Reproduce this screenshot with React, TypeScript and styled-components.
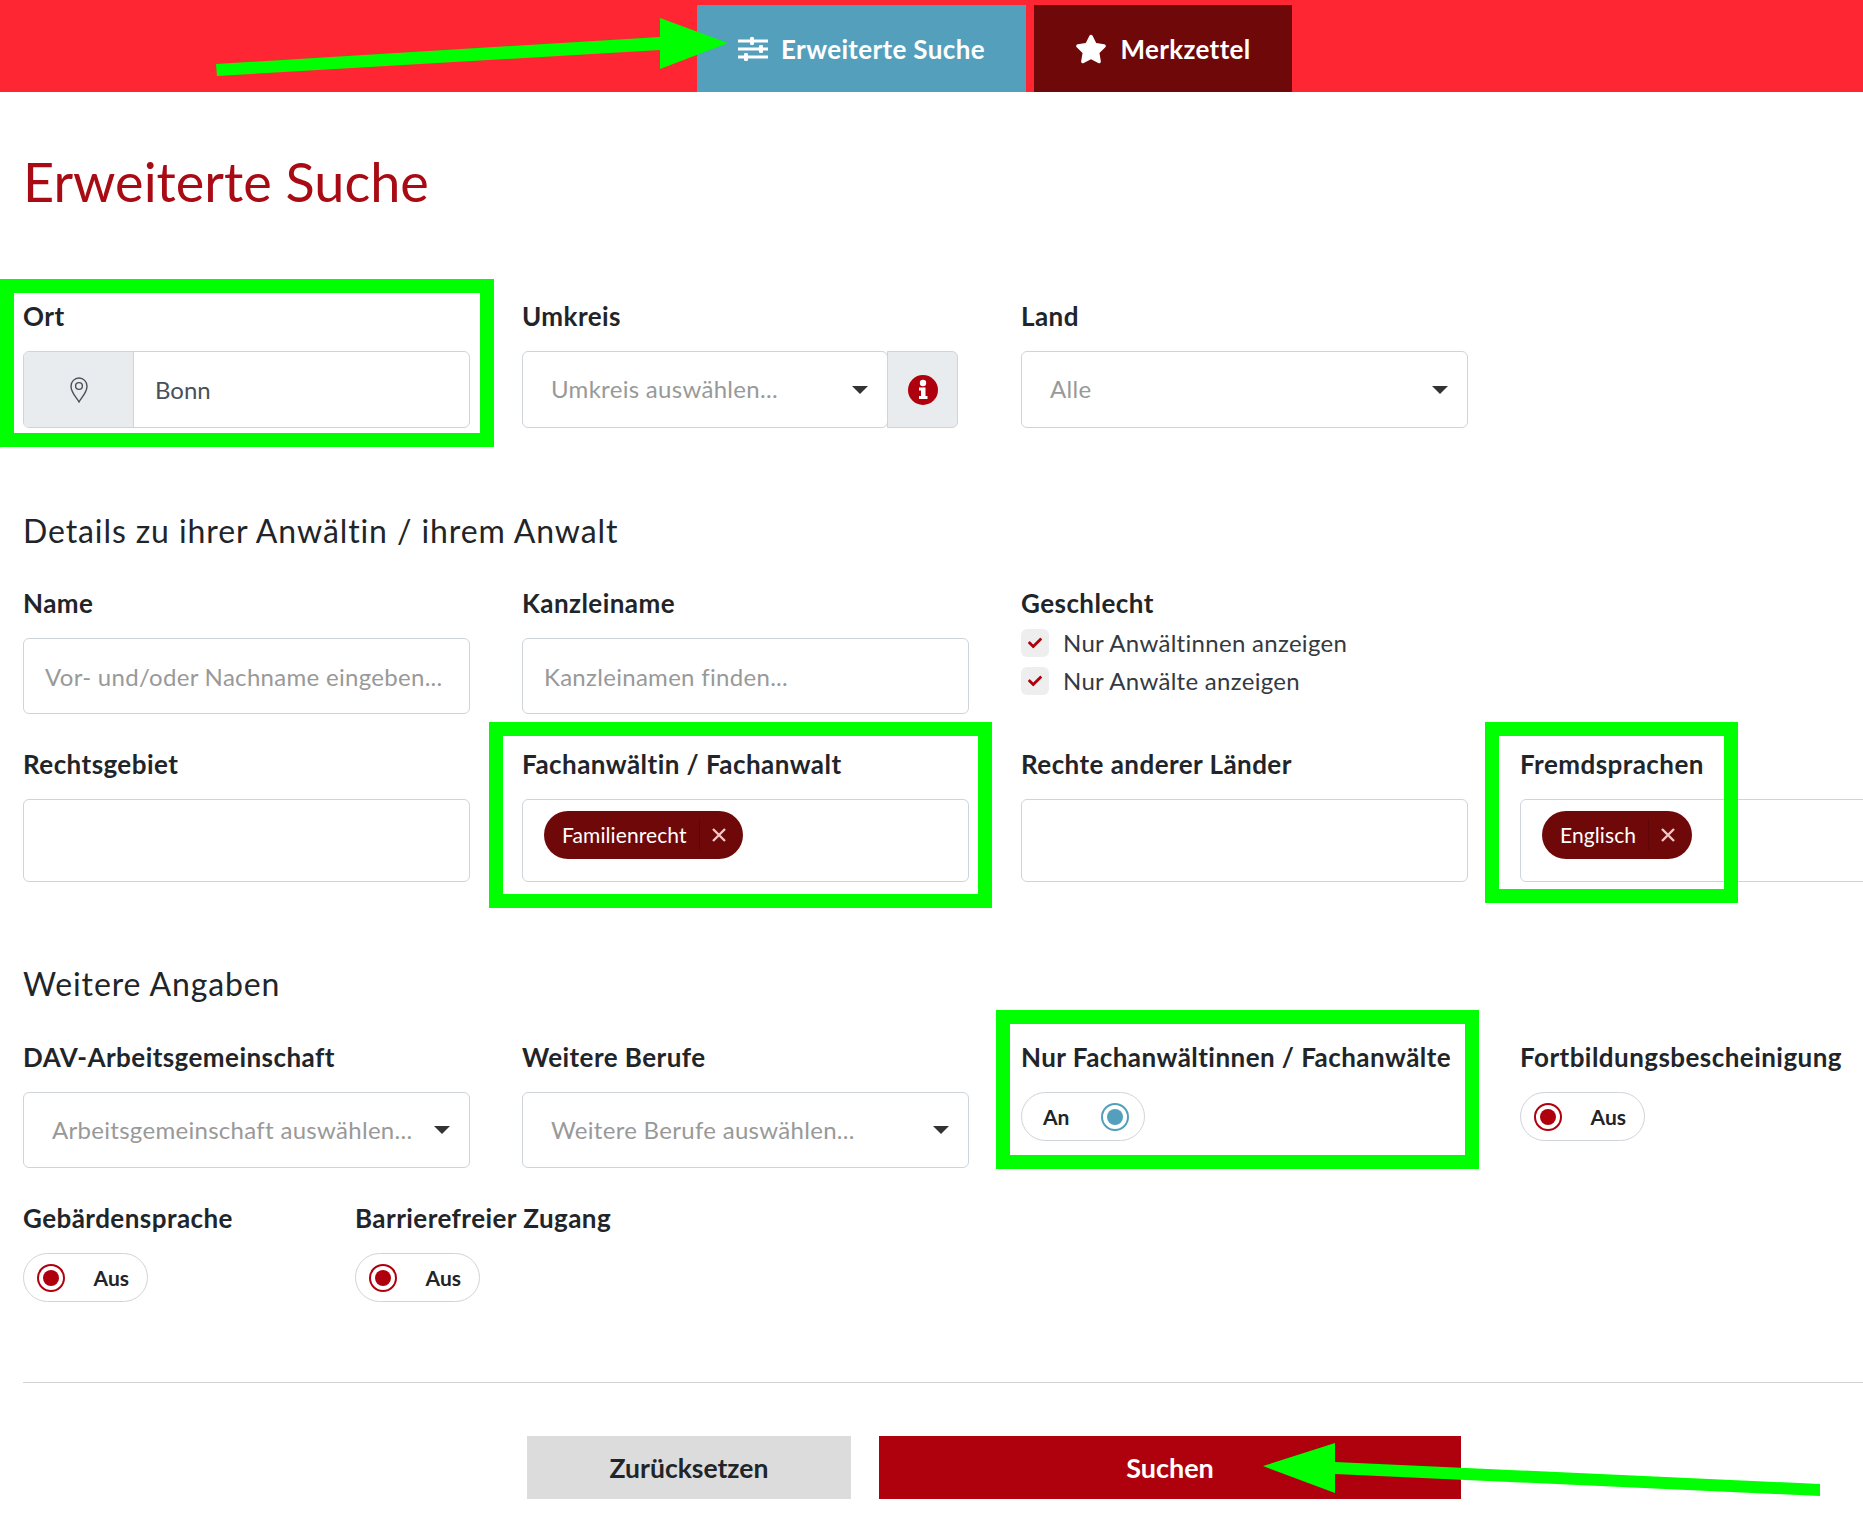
import React from 'react';
import styled, { createGlobalStyle } from 'styled-components';
import { FaCheck, FaStar } from 'react-icons/fa';

const GlobalStyle = createGlobalStyle`
  html, body {
    margin: 0;
    padding: 0;
    background: #fff;
    overflow: hidden;
  }
  body {
    font-family: Lato, "Noto Sans", sans-serif;
    color: #212529;
  }
`;

const Page = styled.div`
  position: relative;
  width: 1863px;
  height: 1521px;
  overflow: hidden;
`;

const Header = styled.header`
  height: 92px;
  background: #ff2633;
  display: flex;
  align-items: flex-end;
  padding-left: 697px;
  gap: 8px;
`;

const Tab = styled.div<{ $dark?: boolean }>`
  height: 87px;
  width: ${p => (p.$dark ? '258px' : '329px')};
  background: ${p => (p.$dark ? '#6f0808' : '#539fbc')};
  color: #fff;
  display: flex;
  align-items: center;
  justify-content: center;
  gap: 13px;
  font-size: 26px;
  font-weight: 700;
  letter-spacing: 0.35px;
`;

const Main = styled.main`
  padding: 0 0 0 23px;
`;

const Title = styled.h1`
  margin: 0;
  padding-top: 53px;
  height: 100px;
  font-size: 54px;
  line-height: 74px;
  font-weight: 400;
  color: #a80b14;
`;

const Grid = styled.div`
  display: grid;
  grid-template-columns: repeat(4, 446.5px);
  column-gap: 52.5px;
`;

const LocationGrid = styled(Grid)`
  margin-top: 54px;
`;

const SectionTitle = styled.h2`
  margin: 0;
  font-size: 32px;
  line-height: 40px;
  font-weight: 400;
  letter-spacing: 0.9px;
  color: #212529;
`;

const Field = styled.div`
  display: flex;
  flex-direction: column;
`;

const Label = styled.label`
  font-size: 26px;
  line-height: 34px;
  font-weight: 700;
  letter-spacing: 0.45px;
  color: #212529;
  white-space: nowrap;
  margin-bottom: 18px;
`;

const InputShell = styled.div<{ $height?: number; $grow?: boolean }>`
  height: ${p => p.$height ?? 76}px;
  box-sizing: border-box;
  border: 1px solid #ced4da;
  border-radius: 6px;
  background: #fff;
  display: flex;
  align-items: center;
  font-size: 24px;
  flex: ${p => (p.$grow ? 1 : 'none')};
`;

const Addon = styled.div`
  width: 109px;
  height: 100%;
  background: #e9ecef;
  border-right: 1px solid #ced4da;
  border-radius: 5px 0 0 5px;
  display: flex;
  align-items: center;
  justify-content: center;
  color: #495057;
  flex: none;
`;

const Value = styled.span`
  padding-left: 21px;
  color: #495057;
`;

const Placeholder = styled.span<{ $select?: boolean }>`
  padding-left: ${p => (p.$select ? 28 : 21)}px;
  padding-bottom: ${p => (p.$select ? 2 : 0)}px;
  color: #999;
  letter-spacing: 0.3px;
  white-space: nowrap;
  flex: 1;
`;

const Caret = styled.span`
  width: 0;
  height: 0;
  flex: none;
  margin-right: 19px;
  border-left: 8px solid transparent;
  border-right: 8px solid transparent;
  border-top: 8px solid #333;
`;

const SelectGroup = styled.div`
  display: flex;
  width: 436px;
`;

const InfoAddon = styled.div`
  width: 71px;
  flex: none;
  margin-left: -1px;
  height: 77px;
  box-sizing: border-box;
  background: #e9ecef;
  border: 1px solid #ced4da;
  border-radius: 0 6px 6px 0;
  display: flex;
  align-items: center;
  justify-content: center;
`;

const Chip = styled.div`
  margin-left: 21px;
  height: 48px;
  margin-top: -12px;
  background: #6f0808;
  color: #fff;
  border-radius: 24px;
  display: flex;
  align-items: center;
  padding: 0 17px 0 18px;
  font-size: 21px;
  letter-spacing: 0.1px;
`;

const ChipClose = styled.span`
  margin-left: 12px;
  padding-left: 12px;
  border-left: 1px solid #5d0606;
  height: 30px;
  display: flex;
  align-items: center;
  color: #f3c6c6;
  font-size: 0;
`;

const CheckList = styled.div`
  display: flex;
  flex-direction: column;
  gap: 10px;
  margin-top: -9px;
`;

const CheckRow = styled.div`
  display: flex;
  align-items: center;
  gap: 14px;
  font-size: 24px;
  line-height: 28px;
  letter-spacing: 0.3px;
  color: #343a40;
`;

const CheckBox = styled.span`
  width: 28px;
  height: 28px;
  border-radius: 6px;
  background: #eeeeef;
  color: #af000d;
  display: flex;
  align-items: center;
  justify-content: center;
  font-size: 14px;
`;

const Toggle = styled.div<{ $on?: boolean }>`
  height: 49px;
  width: ${p => (p.$on ? 124 : 125)}px;
  box-sizing: border-box;
  border: 1px solid #ced4da;
  border-radius: 25px;
  display: flex;
  flex-direction: ${p => (p.$on ? 'row-reverse' : 'row')};
  align-items: center;
  justify-content: space-between;
  padding: ${p => (p.$on ? '0 15px 0 21px' : '0 18px 0 13px')};
  font-size: 21px;
  font-weight: 700;
`;

const Dot = styled.span<{ $on?: boolean }>`
  width: 28px;
  height: 28px;
  box-sizing: border-box;
  border-radius: 50%;
  border: 2px solid ${p => (p.$on ? '#539fbc' : '#af000d')};
  display: flex;
  align-items: center;
  justify-content: center;
  &::after {
    content: '';
    width: 16px;
    height: 16px;
    border-radius: 50%;
    background: ${p => (p.$on ? '#539fbc' : '#af000d')};
  }
`;

const SmallRow = styled.div`
  display: grid;
  grid-template-columns: repeat(2, 280px);
  column-gap: 52px;
  margin-top: 33px;
`;

const Divider = styled.hr`
  margin: 0;
  border: 0;
  border-top: 1px solid #d3d3d3;
`;

const Actions = styled.div`
  display: flex;
  gap: 28px;
  padding: 53px 0 0 504px;
`;

const ActionButton = styled.button<{ $primary?: boolean }>`
  height: 63px;
  width: ${p => (p.$primary ? 582 : 324)}px;
  border: 0;
  background: ${p => (p.$primary ? '#af000d' : '#dcdcdc')};
  color: ${p => (p.$primary ? '#fff' : '#212529')};
  font-family: inherit;
  font-size: ${p => (p.$primary ? 27 : 26.5)}px;
  font-weight: 700;
`;

const Frame = styled.div<{ $x: number; $y: number; $w: number; $h: number }>`
  position: absolute;
  left: ${p => p.$x}px;
  top: ${p => p.$y}px;
  width: ${p => p.$w}px;
  height: ${p => p.$h}px;
  box-sizing: border-box;
  border: 14px solid #00ff00;
  pointer-events: none;
`;

const Arrows = styled.svg`
  position: absolute;
  left: 0;
  top: 0;
  pointer-events: none;
`;

const Spacer = styled.div<{ $h: number }>`
  height: ${p => p.$h}px;
`;

const SlidersIcon = () => (
  <svg width="30" height="24" viewBox="0 0 30 24" fill="#fff">
    <rect x="0" y="2.5" width="30" height="3" />
    <rect x="12" y="0" width="4" height="8" rx="1.2" />
    <rect x="0" y="10.5" width="30" height="3" />
    <rect x="21" y="8" width="4" height="8" rx="1.2" />
    <rect x="0" y="18.5" width="30" height="3" />
    <rect x="6" y="16" width="4" height="8" rx="1.2" />
  </svg>
);

const PinIcon = () => (
  <svg width="18" height="26" viewBox="0 0 18 26" fill="none" stroke="#495057" strokeWidth="1.4">
    <path d="M9 25 C6.5 20.5 1 15.5 1 9.2 C1 4.6 4.6 1 9 1 C13.4 1 17 4.6 17 9.2 C17 15.5 11.5 20.5 9 25 Z" />
    <circle cx="9" cy="9" r="3.4" />
  </svg>
);

const InfoIcon = () => (
  <svg width="30" height="30" viewBox="0 0 30 30">
    <circle cx="15" cy="15" r="15" fill="#af000d" />
    <circle cx="15" cy="8" r="3.2" fill="#fff" />
    <path d="M11 12.5 H17.5 V21 H19.5 V24 H11 V21 H13 V15.5 H11 Z" fill="#fff" />
  </svg>
);

const Tag = ({ label }: { label: string }) => (
  <Chip>
    {label}
    <ChipClose>
      <svg width="14" height="14" viewBox="0 0 14 14" stroke="currentColor" strokeWidth="2.4">
        <path d="M1 1l12 12M13 1L1 13" />
      </svg>
    </ChipClose>
  </Chip>
);

export default function App() {
  return (
    <Page>
      <GlobalStyle />
      <Header>
        <Tab>
          <SlidersIcon />
          Erweiterte Suche
        </Tab>
        <Tab $dark>
          <FaStar size={32} />
          Merkzettel
        </Tab>
      </Header>
      <Main>
        <Title>Erweiterte Suche</Title>
        <LocationGrid>
          <Field>
            <Label>Ort</Label>
            <InputShell $height={77}>
              <Addon>
                <PinIcon />
              </Addon>
              <Value>Bonn</Value>
            </InputShell>
          </Field>
          <Field>
            <Label>Umkreis</Label>
            <SelectGroup>
              <InputShell $height={77} $grow>
                <Placeholder $select>Umkreis auswählen...</Placeholder>
                <Caret />
              </InputShell>
              <InfoAddon>
                <InfoIcon />
              </InfoAddon>
            </SelectGroup>
          </Field>
          <Field>
            <Label>Land</Label>
            <InputShell $height={77}>
              <Placeholder $select>Alle</Placeholder>
              <Caret />
            </InputShell>
          </Field>
        </LocationGrid>
        <Spacer $h={83} />
        <SectionTitle>Details zu ihrer Anwältin / ihrem Anwalt</SectionTitle>
        <Spacer $h={35} />
        <Grid>
          <Field>
            <Label>Name</Label>
            <InputShell>
              <Placeholder>Vor- und/oder Nachname eingeben...</Placeholder>
            </InputShell>
          </Field>
          <Field>
            <Label>Kanzleiname</Label>
            <InputShell>
              <Placeholder>Kanzleinamen finden...</Placeholder>
            </InputShell>
          </Field>
          <Field>
            <Label>Geschlecht</Label>
            <CheckList>
              <CheckRow>
                <CheckBox><FaCheck /></CheckBox>
                Nur Anwältinnen anzeigen
              </CheckRow>
              <CheckRow>
                <CheckBox><FaCheck /></CheckBox>
                Nur Anwälte anzeigen
              </CheckRow>
            </CheckList>
          </Field>
        </Grid>
        <Spacer $h={33} />
        <Grid>
          <Field>
            <Label>Rechtsgebiet</Label>
            <InputShell $height={83} />
          </Field>
          <Field>
            <Label>Fachanwältin / Fachanwalt</Label>
            <InputShell $height={83}>
              <Tag label="Familienrecht" />
            </InputShell>
          </Field>
          <Field>
            <Label>Rechte anderer Länder</Label>
            <InputShell $height={83} />
          </Field>
          <Field>
            <Label>Fremdsprachen</Label>
            <InputShell $height={83}>
              <Tag label="Englisch" />
            </InputShell>
          </Field>
        </Grid>
        <Spacer $h={82} />
        <SectionTitle>Weitere Angaben</SectionTitle>
        <Spacer $h={36} />
        <Grid>
          <Field>
            <Label>DAV-Arbeitsgemeinschaft</Label>
            <InputShell>
              <Placeholder $select>Arbeitsgemeinschaft auswählen...</Placeholder>
              <Caret />
            </InputShell>
          </Field>
          <Field>
            <Label>Weitere Berufe</Label>
            <InputShell>
              <Placeholder $select>Weitere Berufe auswählen...</Placeholder>
              <Caret />
            </InputShell>
          </Field>
          <Field>
            <Label>Nur Fachanwältinnen / Fachanwälte</Label>
            <Toggle $on>
              <Dot $on />
              An
            </Toggle>
          </Field>
          <Field>
            <Label>Fortbildungsbescheinigung</Label>
            <Toggle>
              <Dot />
              Aus
            </Toggle>
          </Field>
        </Grid>
        <SmallRow>
          <Field>
            <Label>Gebärdensprache</Label>
            <Toggle>
              <Dot />
              Aus
            </Toggle>
          </Field>
          <Field>
            <Label>Barrierefreier Zugang</Label>
            <Toggle>
              <Dot />
              Aus
            </Toggle>
          </Field>
        </SmallRow>
        <Spacer $h={80} />
        <Divider />
        <Actions>
          <ActionButton>Zurücksetzen</ActionButton>
          <ActionButton $primary>Suchen</ActionButton>
        </Actions>
      </Main>

      <Frame $x={0} $y={279} $w={494} $h={168} />
      <Frame $x={489} $y={722} $w={503} $h={186} />
      <Frame $x={1485} $y={722} $w={253} $h={181} />
      <Frame $x={996} $y={1010} $w={483} $h={159} />
      <Arrows width="1863" height="1521" viewBox="0 0 1863 1521" fill="#00ff00">
        <path d="M216 64 L660 37 L660 18 L728 43 L660 69 L660 50 L217 76 Z" />
        <path d="M1820 1484 L1335 1462 L1335 1443 L1263 1466 L1335 1493 L1335 1474 L1820 1496 Z" />
      </Arrows>
    </Page>
  );
}
